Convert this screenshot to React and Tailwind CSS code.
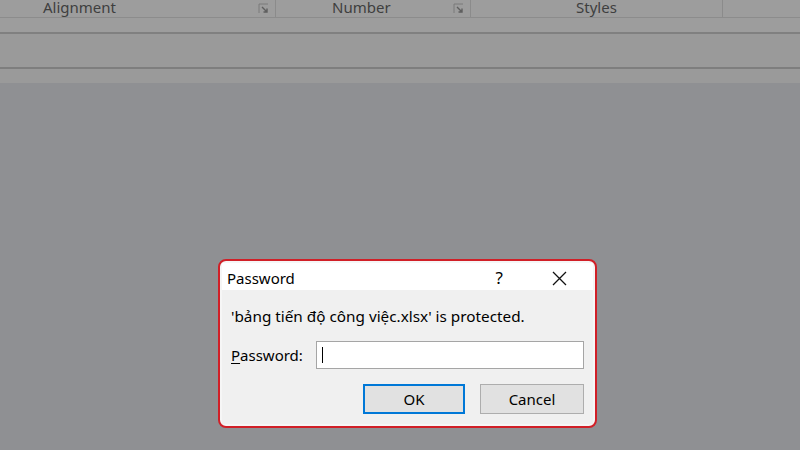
import React from "react";

function Launcher() {
  return (
    <svg width="11" height="11" viewBox="0 0 11 11" className="mt-[3px]">
      <path d="M1 10V1h9" fill="none" stroke="#7a7a7a" strokeWidth="1" />
      <path d="M4 4l5 5M9 5.5V9H5.5" fill="none" stroke="#5e5e5e" strokeWidth="1.4" />
    </svg>
  );
}

function RibbonGroup({ label, width, textLeft, launcher }) {
  return (
    <div className="relative h-full border-r border-[#8b8b8b]" style={{ width }}>
      <span className="absolute top-0 leading-[14px] text-[15px] text-[#3f3f3f]" style={{ left: textLeft }}>
        {label}
      </span>
      {launcher && (
        <div className="absolute right-[6px] top-0">
          <Launcher />
        </div>
      )}
    </div>
  );
}

export default function App() {
  return (
    <div className="w-[800px] h-[450px] overflow-hidden bg-[#8f9093] font-['Segoe_UI','Noto_Sans',sans-serif]">
      {/* ribbon remains */}
      <div className="bg-[#9d9d9d]">
        <div className="flex h-[18px] border-b border-[#8c8c8c]">
          <RibbonGroup label="Alignment" width={276} textLeft={43} launcher />
          <RibbonGroup label="Number" width={195} textLeft={56} launcher />
          <RibbonGroup label="Styles" width={252} textLeft={105} />
          <div className="flex-1" />
        </div>
        <div className="h-[16px] border-b-2 border-[#808080]" />
        <div className="h-[35px] bg-[#9a9a9a] border-b-2 border-[#7e7e7e]" />
        <div className="h-[14px] bg-[#9a9a9a]" />
      </div>

      {/* dialog */}
      <div className="ml-[218px] mt-[176px] w-[379px] h-[169px] rounded-[8px] border-2 border-[#d11f27] bg-[#f6f6f6] p-[2px]">
        <div className="w-full h-full bg-[#f0f0f0] flex flex-col">
          <div className="h-[27px] bg-white flex items-center text-[15px] text-black">
            <span className="ml-[5px] mt-[4px]">Password</span>
            <span className="ml-auto mr-[49px] mt-[3px] text-[17px]">?</span>
            <svg width="15" height="15" viewBox="0 0 15 15" className="mr-[26px] mt-[3px]">
              <path d="M1 1l13 13M14 1L1 14" stroke="#111" strokeWidth="1.3" fill="none" />
            </svg>
          </div>
          <div className="pl-[9px] pt-[16px] text-[15.3px] leading-[20px] text-black">
            'bảng tiến độ công việc.xlsx' is protected.
          </div>
          <div className="flex items-center pl-[9px] mt-[15px]">
            <span className="text-[15px] text-black w-[85px]">
              <span className="underline underline-offset-2">P</span>assword:
            </span>
            <div className="w-[268px] h-[28px] bg-white border border-[#a5a5a5] flex items-center pl-[5px]">
              <div className="w-px h-[16px] bg-black" />
            </div>
          </div>
          <div className="flex justify-end gap-[15px] mt-[15px] pr-[9px]">
            <button className="w-[102px] h-[30px] bg-[#e1e1e1] border-2 border-[#0078d7] text-[15px] text-black">
              OK
            </button>
            <button className="w-[104px] h-[30px] bg-[#e1e1e1] border border-[#adadad] text-[15px] text-black">
              Cancel
            </button>
          </div>
        </div>
      </div>
    </div>
  );
}
